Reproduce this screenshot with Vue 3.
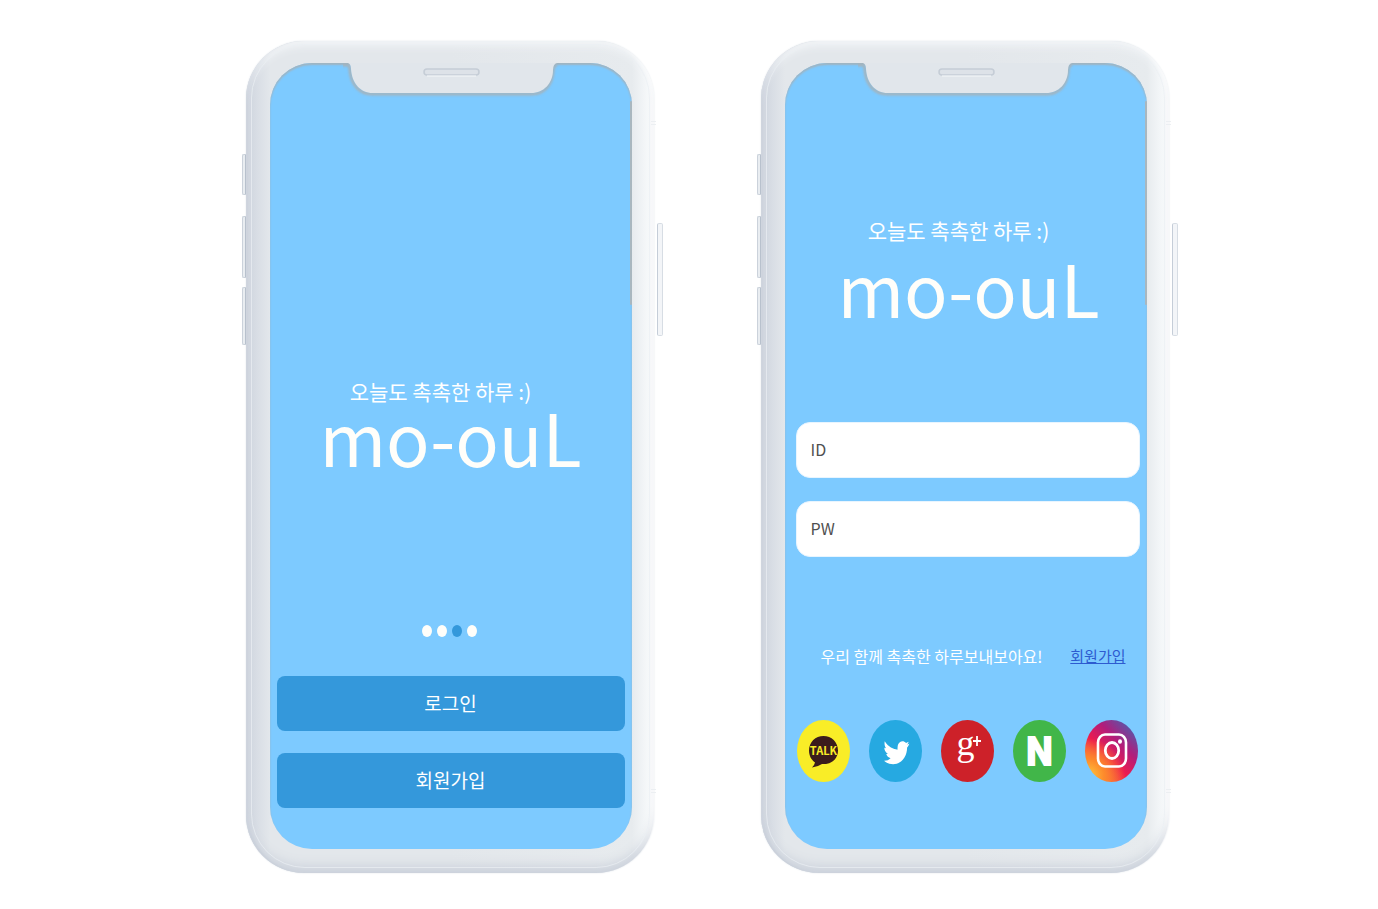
<script setup>
import { ref } from 'vue'

const phones = ['welcome', 'login']
const slides = [1, 2, 3, 4]
const activeSlide = ref(3)
const userId = ref('')
const password = ref('')
</script>

<template>
  <main class="showcase">
    <section v-for="phone in phones" :key="phone" class="phone">
      <span class="key key-mute"></span>
      <span class="key key-up"></span>
      <span class="key key-down"></span>
      <span class="key key-power"></span>
      <span class="seam seam-top"></span>
      <span class="seam seam-bottom"></span>

      <div class="screen" :class="phone">
        <span class="edge"></span>
        <svg class="notch" viewBox="0 0 216 36" aria-hidden="true">
          <path
            d="M0 1H5Q8 1 8 6C9 20 17 30 30 30H190C203 30 210 20 211 7Q211 1 215 1"
            transform="translate(-1 1)"
            fill="none"
            stroke="#a5b3bb"
            stroke-width="3"
            class="notch-shadow"
          />
          <path d="M0 0H5Q8 1 8 6C9 20 17 30 30 30H188C201 30 210 20 210 7Q210 1 214 0Z" fill="#e1e6eb" />
          <rect x="81" y="6" width="55" height="6" rx="3" fill="#dde2e8" stroke="#c5cdd6" stroke-width="1.5" />
          <path d="M84 13H133" stroke="#f6f8fa" stroke-width="1" />
        </svg>

        <header class="brand">
          <p class="tagline">오늘도 촉촉한 하루 :)</p>
          <h1 class="logo">mo-ouL</h1>
        </header>

        <template v-if="phone === 'welcome'">
          <nav class="dots" aria-label="슬라이드">
            <button
              v-for="slide in slides"
              :key="slide"
              type="button"
              class="dot"
              :class="{ active: slide === activeSlide }"
              :aria-label="String(slide)"
              @click="activeSlide = slide"
            ></button>
          </nav>
          <div class="actions">
            <button type="button" class="action">로그인</button>
            <button type="button" class="action">회원가입</button>
          </div>
        </template>

        <template v-else>
          <form class="fields" @submit.prevent>
            <input v-model="userId" class="field" type="text" placeholder="ID" aria-label="ID" />
            <input v-model="password" class="field" type="password" placeholder="PW" aria-label="PW" />
          </form>
          <p class="join">
            <span>우리 함께 촉촉한 하루보내보아요!</span>
            <a href="#join">회원가입</a>
          </p>
          <div class="social">
            <a href="#kakao" class="badge kakao" aria-label="KakaoTalk">
              <svg viewBox="0 0 53 62">
                <path d="M26.500 16C18.500 16 12 22 12 30.500C12 36 14.500 40 18 42.500Q17.500 45 15 47.500Q20.500 47 25 44C34 45 41 39 41 30.500C41 22 34.500 16 26.500 16Z" fill="#3b1c1c" />
                <text x="26.500" y="35" class="talk">TALK</text>
              </svg>
            </a>
            <a href="#twitter" class="badge twitter" aria-label="Twitter">
              <svg viewBox="0 0 53 62">
                <path
                  transform="translate(15 18) scale(1.06 1.2)"
                  fill="#fff"
                  d="M23.950 4.570L22 5.600L23.300 3.200L20.800 4.200C18.500 1.700 15 2.400 13.500 5C12.600 6.700 12.900 8.300 12.700 9.700C9 9.600 4 7.500 .700 2.800C.200 5 .600 7 2 8.500L.300 8.200C.400 10.500 1.600 12.200 3.700 13.200L2.100 13.400C2.800 15.300 4.200 16.400 6.200 16.800C4.500 18.300 2.500 19 0 18.900C3.500 21.600 8 22.400 12 21.400C18 20 21.800 14.500 21.800 8C22.700 7 23.400 6 23.950 4.570Z"
                />
              </svg>
            </a>
            <a href="#google" class="badge google" aria-label="Google+">
              <svg viewBox="0 0 53 62">
                <text x="24.500" y="35" class="gee">g</text>
                <path d="M36 16V26M32 21H40" stroke="#fff" stroke-width="1.800" />
              </svg>
            </a>
            <a href="#naver" class="badge naver" aria-label="Naver">
              <svg viewBox="0 0 53 62">
                <text x="26.500" y="45" class="en">N</text>
              </svg>
            </a>
            <a href="#instagram" class="badge instagram" aria-label="Instagram">
              <svg viewBox="0 0 53 62" fill="none" stroke="#fff">
                <rect x="13" y="14.500" width="28" height="32" rx="7" ry="8" stroke-width="2.600" />
                <ellipse cx="27" cy="30.500" rx="6.700" ry="8" stroke-width="2.800" />
                <ellipse cx="35" cy="21.500" rx="2" ry="2.200" fill="#fff" stroke="none" />
              </svg>
            </a>
          </div>
        </template>
      </div>
    </section>
  </main>
</template>

<style>
body {
  margin: 0;
  background: #fff;
}
</style>

<style scoped>
* {
  box-sizing: border-box;
}

.showcase {
  display: flex;
  justify-content: center;
  gap: 107px;
  padding: 41px 0 36px 36px;
  font-family: "Noto Sans CJK KR", "Noto Sans", sans-serif;
}

.phone {
  position: relative;
  flex: 0 0 408px;
  padding: 22px 22px 24px 24px;
  border-radius: 58px;
  background: linear-gradient(90deg, #cdd3dd 0, #d9dee5 12px, #e3e7eb 24px, #e3e7eb 50%, #e7ebee 386px, #f2f5f7 398px, #fcfdfd 100%);
  box-shadow:
    inset 0 8px 10px -4px #f5f7f9,
    inset 0 -12px 12px -5px #cbd1db,
    inset 2px 0 2px #c6cdd8,
    inset -5px 0 3px -3px #fff,
    0 0 2px #dfe4e9;
}

.phone::before {
  content: "";
  position: absolute;
  inset: 3px 4px 5px 5px;
  border: 1px solid rgba(235, 239, 244, 0.7);
  border-radius: 54px;
}

.key {
  position: absolute;
  left: -4px;
  width: 4px;
  border: 1px solid #cbd2db;
  border-right-color: #b8c1cd;
  border-radius: 2px 0 0 2px;
  background: #e9edf1;
}

.key-mute {
  top: 113px;
  height: 41px;
}

.key-up {
  top: 175px;
  height: 62px;
}

.key-down {
  top: 246px;
  height: 58px;
}

.key-power {
  top: 182px;
  right: -9px;
  left: auto;
  width: 6px;
  height: 113px;
  border-color: #d7dde4;
  border-left-color: #c5cdd8;
  border-radius: 2px;
  background: #f3f5f8;
}

.seam {
  position: absolute;
  right: -2px;
  width: 5px;
  height: 4px;
  border: 1px solid #eceff2;
  border-width: 1px 0;
}

.seam-top {
  top: 80px;
}

.seam-bottom {
  bottom: 80px;
}

.screen {
  position: relative;
  display: flex;
  flex-direction: column;
  min-height: 786px;
  border-radius: 42px;
  background: #7dcaff;
  box-shadow: inset 0 2px 2px #a1b4c0;
}

.edge {
  position: absolute;
  top: 38px;
  right: 0;
  width: 2px;
  height: 204px;
  border-radius: 2px;
  background: #a9b7bf;
}

.notch {
  position: absolute;
  top: 0;
  left: 73px;
  width: 216px;
  height: 36px;
}

.notch-shadow {
  filter: blur(1px);
}

.brand {
  color: #fff;
  text-align: center;
}

.welcome .brand {
  padding-top: 316px;
}

.login .brand {
  padding-top: 155px;
  padding-left: 6px;
}

.tagline {
  margin: 0;
  padding-right: 20px;
  font-size: 21px;
  font-weight: 400;
  line-height: 24px;
}

.logo {
  margin: 0;
  color: #fffefa;
  font-size: 72px;
  font-weight: 400;
  line-height: 66px;
}

.login .logo {
  margin-top: 12px;
}

.dots {
  display: flex;
  justify-content: center;
  gap: 5px;
  margin-top: 156px;
  padding-right: 2px;
}

.dot {
  width: 10px;
  height: 12px;
  padding: 0;
  border: 0;
  border-radius: 50%;
  background: #fffefa;
}

.dot.active {
  background: #3498db;
}

.actions {
  display: grid;
  gap: 22px;
  margin-top: 39px;
  padding: 0 7px 41px;
}

.action {
  height: 55px;
  padding: 0 0 2px;
  border: 0;
  border-radius: 8px;
  background: #3498db;
  color: #fff;
  font-family: inherit;
  font-size: 19px;
  line-height: 28px;
}

.fields {
  display: grid;
  gap: 23px;
  margin-top: 102px;
  padding: 0 7px 0 11px;
}

.field {
  width: 100%;
  height: 56px;
  padding: 0 14px 2px;
  border: 1px solid #e8f5ff;
  border-radius: 14px;
  outline: 0;
  background: #fff;
  color: #505050;
  font-family: inherit;
  font-size: 16px;
}

.field::placeholder {
  color: #505050;
  opacity: 1;
}

.join {
  display: flex;
  justify-content: space-between;
  margin: 87px 0 0;
  padding: 0 21px 0 36px;
  color: #fff;
  font-size: 16px;
  line-height: 24px;
}

.join a {
  color: #2d5bd0;
  font-size: 15px;
}

.social {
  display: flex;
  justify-content: space-between;
  margin-top: 52px;
  padding: 0 9px 0 12px;
}

.badge {
  width: 53px;
  height: 62px;
  overflow: hidden;
  border-radius: 50%;
}

.badge svg {
  display: block;
  width: 100%;
  height: 100%;
}

.kakao {
  background: #f9ed27;
}

.twitter {
  background: #26a9e1;
}

.google {
  background: #cd2129;
}

.naver {
  background: #41b649;
}

.instagram {
  background:
    radial-gradient(circle at 5% 90%, #ffc93c 0, #fd8a2c 22%, rgba(250, 60, 60, 0) 50%),
    linear-gradient(45deg, #fb6b35 15%, #ee1c4e 42%, #b01d7c 65%, #5b55a8 88%);
}

.talk {
  fill: #f9ed27;
  font-size: 11px;
  font-weight: 700;
  text-anchor: middle;
}

.gee {
  fill: #fff;
  font-family: "Liberation Serif", serif;
  font-size: 36px;
  text-anchor: middle;
}

.en {
  fill: #fff;
  stroke: #fff;
  stroke-width: 2px;
  font-size: 38px;
  font-weight: 700;
  text-anchor: middle;
}
</style>
